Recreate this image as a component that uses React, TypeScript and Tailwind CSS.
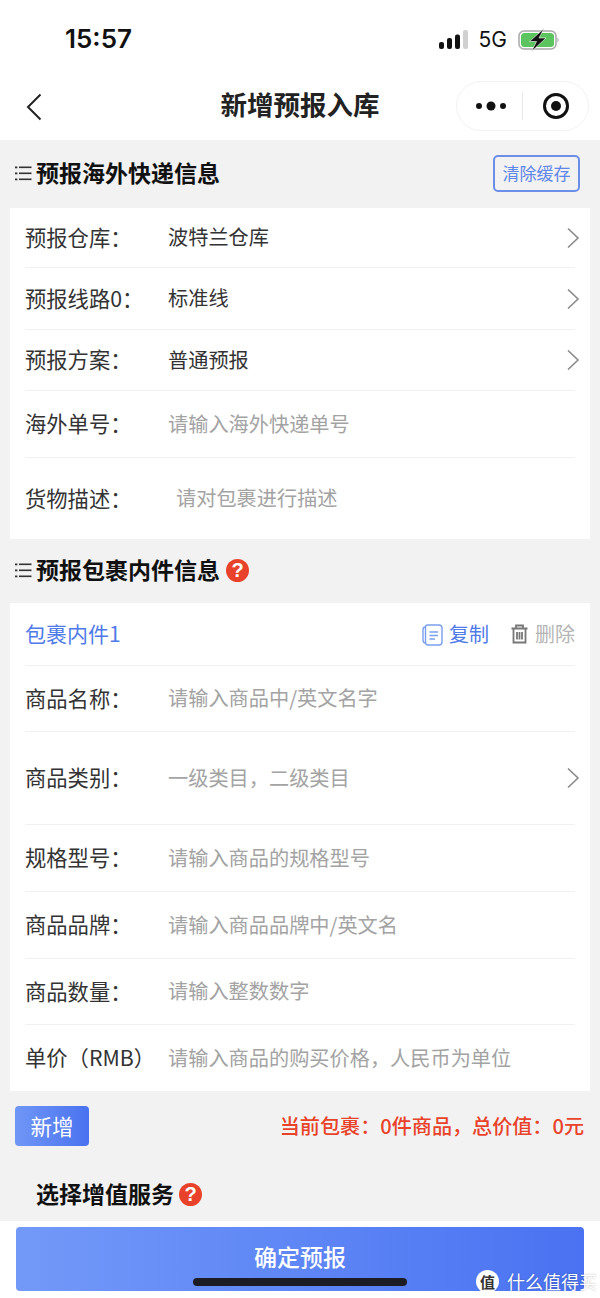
import React from "react";

const font = { fontFamily: '"Noto Sans CJK SC", "Liberation Sans", sans-serif' };

function Chevron() {
  return (
    <svg width="14" height="22" viewBox="0 0 14 22" fill="none" className="-mr-[5px] shrink-0">
      <path d="M2 1.5 L12 11 L2 20.5" stroke="#8a8a8a" strokeWidth="1.6" />
    </svg>
  );
}

function ListIcon() {
  return (
    <svg width="17" height="15" viewBox="0 0 17 15" className="shrink-0">
      <g fill="#333">
        <rect x="0" y="0.5" width="2.4" height="1.8" />
        <rect x="0" y="6.5" width="2.4" height="1.8" />
        <rect x="0" y="12.5" width="2.4" height="1.8" />
        <rect x="4" y="0.5" width="12.5" height="1.6" />
        <rect x="4" y="6.5" width="12.5" height="1.6" />
        <rect x="4" y="12.5" width="12.5" height="1.6" />
      </g>
    </svg>
  );
}

function Help() {
  return (
    <span
      style={{ fontFamily: '"Liberation Sans", sans-serif' }}
      className="flex h-[23px] w-[23px] shrink-0 items-center justify-center rounded-full bg-[#e8432a] text-[20px] font-bold leading-none text-white"
    >
      ?
    </span>
  );
}

function Row({
  label,
  value,
  placeholder,
  chevron,
  h,
  last,
  valueClass,
}: {
  label: string;
  value?: string;
  placeholder?: string;
  chevron?: boolean;
  h: string;
  last?: boolean;
  valueClass?: string;
}) {
  return (
    <div className={`mx-[15px] flex items-center ${h} ${last ? "" : "border-b border-[#f0f0f0]"}`}>
      <div className="w-[143px] shrink-0 whitespace-nowrap pb-[2px] text-[21.3px] text-[#333]">{label}</div>
      <div className={`flex-1 text-[20.2px] ${value ? "text-[#333]" : "text-[#a3a3a3]"} ${valueClass ?? ""}`}>
        {value ?? placeholder}
      </div>
      {chevron && <Chevron />}
    </div>
  );
}

export default function App() {
  return (
    <div style={font} className="relative flex h-[1298px] w-[600px] flex-col overflow-hidden bg-[#f2f2f2]">
      {/* status + nav */}
      <div className="h-[140px] shrink-0 bg-white">
        <div className="flex h-[80px] items-start justify-between pl-[65px] pr-[40px] pt-[23px]">
          <span style={{ fontFamily: "Inter, sans-serif" }} className="text-[26px] font-semibold leading-[32px] text-[#111]">
            15:57
          </span>
          <div className="flex items-center pt-[5px]">
            <svg width="30" height="20" viewBox="0 0 30 20">
              <rect x="0" y="12" width="5" height="7" rx="2" fill="#111" />
              <rect x="8" y="8" width="5" height="11" rx="2" fill="#111" />
              <rect x="16" y="4.5" width="5" height="14.5" rx="2" fill="#111" />
              <rect x="24" y="0" width="5" height="19" rx="2" fill="#d0d0d0" />
            </svg>
            <span style={{ fontFamily: "Inter, sans-serif" }} className="ml-[10px] text-[21px] leading-[24px] text-[#111]">
              5G
            </span>
            <svg width="42" height="24" viewBox="0 0 42 24" className="ml-[11px]">
              <rect x="1" y="3" width="37" height="18" rx="5" fill="none" stroke="#a8a8a8" strokeWidth="1.5" />
              <rect x="3" y="5" width="33" height="14" rx="3.5" fill="#5cc45e" />
              <path d="M39.5 9.5 q2.2 2.5 0 5z" fill="#9a9a9a" />
              <path d="M26 0.5 L11.5 13.5 H18.5 L13.5 23.5 L28 10 H21 Z" fill="#111" stroke="#fff" strokeWidth="0.6" />
            </svg>
          </div>
        </div>
        <div className="relative flex h-[50px] items-center justify-center">
          <svg width="16" height="28" viewBox="0 0 16 28" className="absolute left-[26px] top-[13px]">
            <path d="M14.5 1.5 L2 14 L14.5 26.5" fill="none" stroke="#222" strokeWidth="2" />
          </svg>
          <span className="pb-[2px] text-[26.5px] font-bold text-[#222]">新增预报入库</span>
          <div className="absolute left-[456px] top-[1px] flex h-[50px] w-[133px] items-center rounded-full border border-[#f2f2f2]">
            <svg width="32" height="12" viewBox="0 0 32 12" className="ml-[18px]">
              <circle cx="4" cy="6" r="3" fill="#111" />
              <circle cx="16" cy="6" r="4.5" fill="#111" />
              <circle cx="28" cy="6" r="3" fill="#111" />
            </svg>
            <div className="ml-[15px] h-[28px] w-px bg-[#e8e8e8]" />
            <svg width="28" height="28" viewBox="0 0 28 28" className="ml-[19px]">
              <circle cx="14" cy="14" r="11.5" fill="none" stroke="#111" strokeWidth="3" />
              <circle cx="14" cy="14" r="5" fill="#111" />
            </svg>
          </div>
        </div>
      </div>

      {/* section 1 */}
      <div className="flex h-[68px] items-center pb-[2px] pl-[15px] pr-[20px]">
        <ListIcon />
        <span className="ml-[4px] flex-1 pb-[2px] text-[23px] font-bold text-[#111]">预报海外快递信息</span>
        <div className="flex h-[37px] w-[87px] items-center justify-center rounded-[5px] border-2 border-[#6b8fe8] text-[17px] text-[#5f86e8]">
          清除缓存
        </div>
      </div>
      <div className="mx-[10px] bg-white">
        <Row label="预报仓库：" value="波特兰仓库" chevron h="h-[60px]" />
        <Row label="预报线路0：" value="标准线" chevron h="h-[62px]" />
        <Row label="预报方案：" value="普通预报" chevron h="h-[61px]" />
        <Row label="海外单号：" placeholder="请输入海外快递单号" h="h-[67px]" />
        <Row label="货物描述：" placeholder="请对包裹进行描述" h="h-[81px]" last valueClass="pl-[8px]" />
      </div>

      {/* section 2 */}
      <div className="flex h-[64px] items-center pb-[2px] pl-[15px]">
        <ListIcon />
        <span className="ml-[4px] pb-[2px] text-[23px] font-bold text-[#111]">预报包裹内件信息</span>
        <span className="ml-[6px]">
          <Help />
        </span>
      </div>
      <div className="mx-[10px] bg-white">
        <div className="mx-[15px] flex h-[63px] items-center border-b border-[#f0f0f0]">
          <span className="flex-1 text-[21px] text-[#4f7be8]">包裹内件1</span>
          <svg width="21" height="23" viewBox="0 0 21 23" fill="none" stroke="#7a9ef0" strokeWidth="1.4">
            <path d="M3 4 Q1 4 1 7 V17 Q1 20 3.5 20" />
            <path d="M5.5 2 H17 Q20 2 20 5 V19 Q20 22 17 22 H6 Q3.5 22 3.5 19 V4.5 Q3.5 2 5.5 2Z" fill="#fff" />
            <path d="M7.5 9 H16 M7.5 12.5 H16 M7.5 16 H13" />
          </svg>
          <span className="ml-[6px] text-[20px] text-[#4f7be8]">复制</span>
          <svg width="17" height="20" viewBox="0 0 17 20" fill="none" stroke="#777" strokeWidth="1.8" className="ml-[22px]">
            <path d="M0.5 4.5 H16.5 M5 4.5 V1.5 H12 V4.5 M2.5 4.5 V18.5 H14.5 V4.5 M6 8 V15.5 M8.5 8 V15.5 M11 8 V15.5" />
          </svg>
          <span className="ml-[7px] text-[20px] text-[#b5b5b5]">删除</span>
        </div>
        <Row label="商品名称：" placeholder="请输入商品中/英文名字" h="h-[66px]" />
        <Row label="商品类别：" placeholder="一级类目，二级类目" chevron h="h-[93px]" />
        <Row label="规格型号：" placeholder="请输入商品的规格型号" h="h-[67px]" />
        <Row label="商品品牌：" placeholder="请输入商品品牌中/英文名" h="h-[67px]" />
        <Row label="商品数量：" placeholder="请输入整数数字" h="h-[66px]" />
        <Row label="单价（RMB）" placeholder="请输入商品的购买价格，人民币为单位" h="h-[66px]" last />
      </div>

      {/* totals */}
      <div className="mt-[15px] flex items-center justify-between pl-[15px] pr-[16px]">
        <div className="flex h-[40px] w-[74px] items-center justify-center rounded-[4px] bg-gradient-to-r from-[#7096f5] to-[#4a72f0] text-[21.5px] text-white">
          新增
        </div>
        <span className="text-[20.1px] font-medium text-[#e8432a]">当前包裹：0件商品，总价值：0元</span>
      </div>
      <div className="mb-[3px] mt-[22px] flex h-[50px] items-center pl-[36px]">
        <span className="text-[23px] font-bold text-[#111]">选择增值服务</span>
        <span className="ml-[5px] pt-[2px]">
          <Help />
        </span>
      </div>

      {/* bottom bar */}
      <div className="flex-1 bg-white px-[16px] pt-[6px]">
        <div className="flex h-[64px] items-center justify-center rounded-[4px] bg-gradient-to-r from-[#7399f8] to-[#4a72f2] pb-[5px] text-[23px] font-medium text-white">
          确定预报
        </div>
      </div>

      {/* home indicator */}
      <div className="absolute bottom-[12px] left-[193px] h-[8px] w-[214px] rounded-full bg-[#1c1c24]" />

      {/* watermark */}
      <div className="absolute left-[476px] top-[1269px] flex items-center gap-[8px]">
        <div className="flex h-[23px] w-[23px] items-center justify-center rounded-full bg-white text-[15px] font-bold leading-none text-[#333]">
          值
        </div>
        <span className="whitespace-nowrap text-[18px] leading-[24px] text-white [text-shadow:0_0_2px_rgba(0,0,0,0.3)]">什么值得买</span>
      </div>
    </div>
  );
}
